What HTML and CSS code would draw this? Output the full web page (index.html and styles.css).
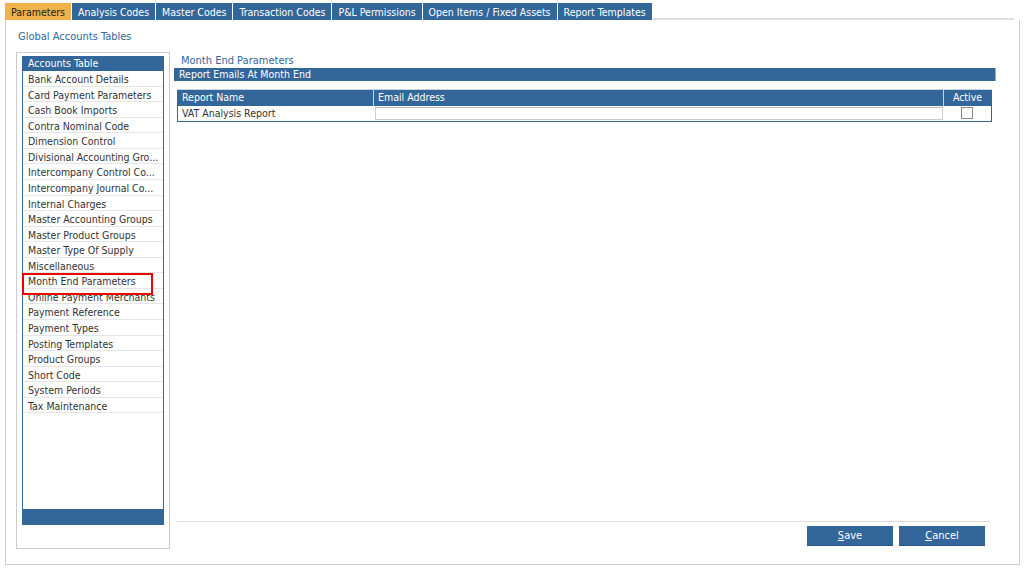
FILE: index.html
```html
<!DOCTYPE html>
<html>
<head>
<meta charset="utf-8">
<link rel="stylesheet" href="styles.css">
</head>
<body>
<div class="tabs">
  <div class="tab active">Parameters</div>
  <div class="tab">Analysis Codes</div>
  <div class="tab">Master Codes</div>
  <div class="tab">Transaction Codes</div>
  <div class="tab">P&amp;L Permissions</div>
  <div class="tab">Open Items / Fixed Assets</div>
  <div class="tab">Report Templates</div>
  <div class="tab-fill"></div>
</div>
<div class="panel">
  <div class="panel-title">Global Accounts Tables</div>
  <div class="panel-body">
    <div class="left-box">
      <div class="list">
        <div class="list-head">Accounts Table</div>
        <div class="list-item">Bank Account Details</div>
        <div class="list-item">Card Payment Parameters</div>
        <div class="list-item">Cash Book Imports</div>
        <div class="list-item">Contra Nominal Code</div>
        <div class="list-item">Dimension Control</div>
        <div class="list-item">Divisional Accounting Gro...</div>
        <div class="list-item">Intercompany Control Co...</div>
        <div class="list-item">Intercompany Journal Co...</div>
        <div class="list-item">Internal Charges</div>
        <div class="list-item">Master Accounting Groups</div>
        <div class="list-item">Master Product Groups</div>
        <div class="list-item">Master Type Of Supply</div>
        <div class="list-item">Miscellaneous</div>
        <div class="list-item selected">Month End Parameters</div>
        <div class="list-item">Online Payment Merchants</div>
        <div class="list-item">Payment Reference</div>
        <div class="list-item">Payment Types</div>
        <div class="list-item">Posting Templates</div>
        <div class="list-item">Product Groups</div>
        <div class="list-item">Short Code</div>
        <div class="list-item">System Periods</div>
        <div class="list-item">Tax Maintenance</div>
        <div class="list-space"></div>
        <div class="list-foot"></div>
      </div>
    </div>
    <div class="right">
      <div class="right-title">Month End Parameters</div>
      <div class="section-bar">Report Emails At Month End</div>
      <table class="grid">
        <thead>
          <tr><th class="c-name">Report Name</th><th class="c-email">Email Address</th><th class="c-active">Active</th></tr>
        </thead>
        <tbody>
          <tr>
            <td class="c-name">VAT Analysis Report</td>
            <td class="c-email"><div class="email-input"></div></td>
            <td class="c-active"><span class="check"></span></td>
          </tr>
        </tbody>
      </table>
      <div class="spacer"></div>
      <div class="divider"></div>
      <div class="buttons">
        <button class="btn"><u>S</u>ave</button>
        <button class="btn"><u>C</u>ancel</button>
      </div>
    </div>
  </div>
</div>
</body>
</html>
```
FILE: styles.css
```css
* { box-sizing: border-box; }
body {
  margin: 0;
  padding: 3px 5px 0 5px;
  background: #fff;
  font-family: "DejaVu Sans Condensed", "DejaVu Sans", sans-serif;
  font-stretch: condensed;
  font-size: 10.5px;
  color: #333;
}
.tabs {
  display: flex;
  height: 17px;
}
.tab {
  background: #336699;
  color: #fff;
  padding: 0 6px;
  line-height: 18px;
  border-right: 1px solid #fff;
  white-space: nowrap;
}
.tab.active {
  background: #f0b04a;
  color: #222;
}
.tab-fill {
  flex: 1;
  border-bottom: 2px solid #ddd;
  margin-right: 5px;
}
.panel {
  width: 1015px;
  height: 545px;
  border: 1px solid #ccc;
  border-top: none;
  padding: 10px 10px 15px 10px;
  display: flex;
  flex-direction: column;
}
.panel-title {
  color: #336699;
  font-size: 11px;
  line-height: 14px;
  padding-left: 2px;
  height: 14px;
}
.panel-body {
  display: flex;
  margin-top: 8px;
  height: 497px;
}
.left-box {
  flex: 0 0 154px;
  width: 154px;
  height: 497px;
  border: 1px solid #ccc;
  padding: 3px 5px 23px 5px;
}
.list {
  height: 100%;
  border: 1px solid #336699;
  border-top: none;
  display: flex;
  flex-direction: column;
}
.list-head {
  background: #336699;
  color: #fff;
  height: 15px;
  line-height: 15px;
  margin: 0 -1px;
  padding-left: 6px;
}
.list-item {
  height: 15.57px;
  line-height: 16px;
  padding-left: 5px;
  border-bottom: 1px solid #e6e6e6;
  white-space: nowrap;
  overflow: hidden;
  position: relative;
}
.list-item.selected::after {
  content: "";
  position: absolute;
  left: -1px;
  top: 0;
  width: 127px;
  height: 18px;
  border: 2px solid #e00;
}
.list-item.selected { overflow: visible; z-index: 1; }
.list-space { flex: 1; }
.list-foot {
  height: 16px;
  background: #336699;
  margin: 0 -1px -1px -1px;
}
.right {
  flex: 1 1 auto;
  min-width: 0;
  margin-left: 4px;
  margin-right: 13px;
  display: flex;
  flex-direction: column;
}
.right-title {
  color: #336699;
  font-size: 11px;
  padding-left: 7px;
  line-height: 14px;
  height: 14px;
  margin-top: 2px;
}
.section-bar {
  background: #336699;
  color: #fff;
  height: 13px;
  line-height: 13px;
  padding-left: 5px;
  border-right: 1px solid #9ab;
}
.grid {
  margin: 8px 4px 0 3px;
  width: 815px;
  border-collapse: collapse;
  border: 1px solid #336699;
}
.grid th {
  background: #336699;
  color: #fff;
  font-weight: normal;
  text-align: left;
  height: 16px;
  padding: 0 4px;
  line-height: 15px;
  border-right: 1px solid #c8d4e0;
  border-top: 1px solid #c8d4e0;
}
.grid td {
  height: 16px;
  padding: 0 4px;
  line-height: 15px;
}
.c-name { width: 196px; }
.c-active { width: 48px; text-align: center; }
.grid th.c-active { text-align: center; border-right: none; }
.grid td.c-email { padding: 1px 1px; }
.email-input {
  height: 13px;
  border: 1px solid #ccc;
  border-top-color: #bbb;
  background: #fff;
}
.check {
  display: inline-block;
  width: 12px;
  height: 12px;
  border: 1px solid #888;
  vertical-align: middle;
  margin-top: -1px;
}
.spacer { flex: 1; }
.divider {
  height: 1px;
  background: #ddd;
  margin: 0 6px 0 3px;
}
.buttons {
  display: flex;
  justify-content: flex-end;
  gap: 6px;
  margin: 4px 11px 3px 0;
}
.btn {
  width: 86px;
  height: 20px;
  background: #336699;
  color: #fff;
  border: none;
  border-bottom: 1px solid #2a5580;
  font-family: inherit;
  font-stretch: condensed;
  font-size: 11px;
  padding: 0;
}
```
